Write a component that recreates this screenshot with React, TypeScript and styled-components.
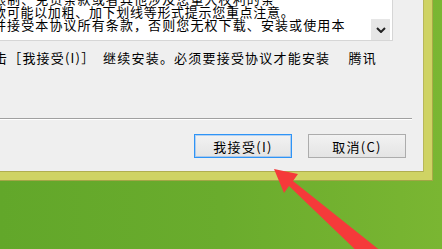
import React from "react";
import styled, { createGlobalStyle } from "styled-components";

const GlobalStyle = createGlobalStyle`
  html, body {
    margin: 0;
    padding: 0;
    width: 442px;
    height: 249px;
    overflow: hidden;
  }
  body {
    background: linear-gradient(90deg, #62a72a 0%, #6aac2d 50%, #7ab632 100%);
    font-family: "Noto Sans CJK SC", "Liberation Sans", sans-serif;
  }
`;

const Page = styled.div`
  position: relative;
  width: 442px;
  height: 249px;
  overflow: hidden;
`;

const Frame = styled.div`
  width: 453px;
  height: 201px;
  margin-left: -20px;
  margin-top: -20px;
  box-sizing: border-box;
  background: #cfd364;
  padding: 0 8px 8px 0;
  border-right: 1px solid #a9aa47;
  border-bottom: 1px solid #a3a546;
`;

const Panel = styled.div`
  height: 100%;
  box-sizing: border-box;
  background: #efefef;
  border-right: 1px solid #b8b75a;
  border-bottom: 1px solid #b0ae50;
  display: flex;
  flex-direction: column;
`;

const TextBox = styled.div`
  width: 413px;
  height: 61px;
  box-sizing: border-box;
  background: #fff;
  border-right: 1px solid #d6d6d6;
  border-bottom: 1px solid #d6d6d6;
  display: flex;
  padding-right: 2px;
`;

const TextContent = styled.div`
  flex: 1;
  overflow: hidden;
  padding: 12px 0 0 13px;
  font-size: 13px;
  line-height: 13px;
  color: #000;
  white-space: nowrap;
`;

const Line = styled.div<{ $spacing: number }>`
  height: 13px;
  letter-spacing: ${(p) => p.$spacing}px;
`;

const ScrollBar = styled.div`
  width: 19px;
  display: flex;
  flex-direction: column;
  justify-content: flex-end;
`;

const ScrollButton = styled.div`
  height: 21px;
  background: #e6e6e6;
  display: flex;
  align-items: center;
  justify-content: center;
`;

const DialogText = styled.div`
  margin-top: 9px;
  padding-left: 14px;
  font-size: 13px;
  line-height: 16px;
  letter-spacing: 1.2px;
  color: #000;
  white-space: pre;
`;

const Separator = styled.div`
  width: 432px;
  margin-top: 52px;
  border-top: 1px solid #a0a0a0;
  border-bottom: 1px solid #ffffff;
`;

const ButtonRow = styled.div`
  display: flex;
  justify-content: flex-end;
  gap: 16px;
  padding-right: 17px;
  margin-top: 14px;
`;

const Button = styled.button<{ $focused?: boolean }>`
  width: 98px;
  height: 24px;
  box-sizing: border-box;
  padding: 0;
  font-family: "Noto Sans CJK SC", "Liberation Sans", sans-serif;
  font-size: 13px;
  letter-spacing: 1.3px;
  color: #000;
  background: linear-gradient(#f2f2f2, #e4e4e4);
  border: 1px solid ${(p) => (p.$focused ? "#2e94f6" : "#acacac")};
  box-shadow: ${(p) =>
    p.$focused ? "inset 0 0 0 1px rgba(60,150,245,0.35)" : "none"};
  display: flex;
  align-items: center;
  justify-content: center;
`;

const ArrowLayer = styled.svg`
  position: absolute;
  left: 0;
  top: 0;
  pointer-events: none;
`;

export default function App() {
  return (
    <Page>
      <GlobalStyle />
      <Frame>
        <Panel>
          <TextBox>
            <TextContent>
              <Line $spacing={1.1}>限制、免责条款或者其他涉及您重大权利的条</Line>
              <Line $spacing={0.7}>款可能以加粗、加下划线等形式提示您重点注意。</Line>
              <Line $spacing={1.1}>并接受本协议所有条款，否则您无权下载、安装或使用本</Line>
            </TextContent>
            <ScrollBar>
              <ScrollButton>
                <svg width="10" height="6" viewBox="0 0 10 6">
                  <path d="M1 1 L5 5 L9 1" fill="none" stroke="#222" strokeWidth="2" />
                </svg>
              </ScrollButton>
            </ScrollBar>
          </TextBox>
          <DialogText>{"击［我接受(I)］　继续安装。必须要接受协议才能安装　 腾讯"}</DialogText>
          <Separator />
          <ButtonRow>
            <Button $focused>我接受(I)</Button>
            <Button>取消(C)</Button>
          </ButtonRow>
        </Panel>
      </Frame>
      <ArrowLayer width="442" height="249" viewBox="0 0 442 249">
        <polygon
          points="274,169 298,174 293,181 382,252 364,258 289,186 284,193"
          fill="#f53a3a"
        />
      </ArrowLayer>
    </Page>
  );
}
